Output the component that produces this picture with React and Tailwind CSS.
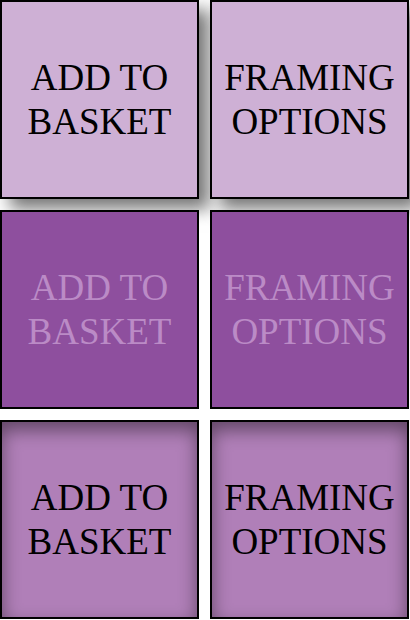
import React from 'react';

const buttons = [
  { id: 'basket', label: 'ADD TO BASKET' },
  { id: 'framing', label: 'FRAMING OPTIONS' },
];

const rows = [
  {
    id: 'raised',
    className: 'bg-[#ceb0d5] text-black shadow-[10px_10px_16px_#777]',
  },
  {
    id: 'disabled',
    className: 'bg-[#8e4f9e] text-[#bb8bc6]',
  },
  {
    id: 'pressed',
    className: 'bg-[#b07fb8] text-black shadow-[inset_0_8px_18px_rgba(0,0,0,0.45)]',
  },
];

const App = () => {
  return (
    <div className="grid grid-cols-[199px_199px] gap-[11px] w-[410px] bg-white">
      {rows.map((row) =>
        buttons.map((button) => (
          <div
            key={`${row.id}-${button.id}`}
            role="button"
            className={`flex items-center justify-center w-[199px] h-[199px] border-2 border-black px-2 text-center font-['Liberation_Serif',serif] text-[37px] leading-[44px] ${row.className}`}
          >
            {button.label}
          </div>
        ))
      )}
    </div>
  );
};

export default App;
